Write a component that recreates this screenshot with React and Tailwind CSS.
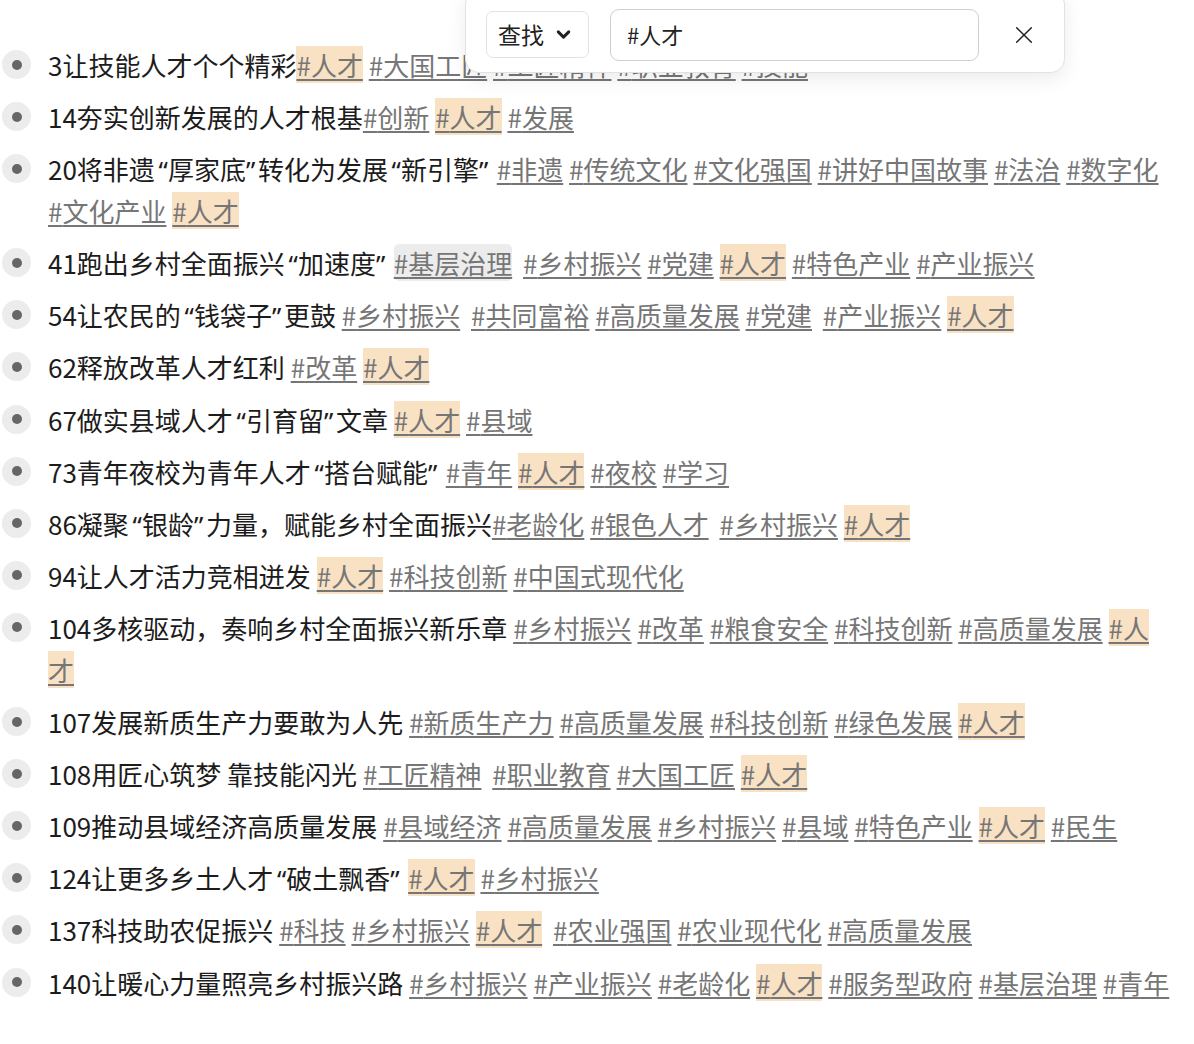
import React, { Fragment } from "react";

const items = [
  { title: "3让技能人才个个精彩", tags: ["人才", "大国工匠", "工匠精神", "职业教育", "技能"] },
  { title: "14夯实创新发展的人才根基", tags: ["创新", "人才", "发展"] },
  {
    title: "20将非遗“厚家底”转化为发展“新引擎” ",
    tags: ["非遗", "传统文化", "文化强国", "讲好中国故事", "法治", "数字化", "文化产业", "人才"],
  },
  { title: "41跑出乡村全面振兴“加速度” ", tags: ["基层治理", "+乡村振兴", "党建", "人才", "特色产业", "产业振兴"], hover: 0 },
  { title: "54让农民的“钱袋子”更鼓 ", tags: ["乡村振兴", "+共同富裕", "高质量发展", "党建", "+产业振兴", "人才"] },
  { title: "62释放改革人才红利 ", tags: ["改革", "人才"] },
  { title: "67做实县域人才“引育留”文章 ", tags: ["人才", "县域"] },
  { title: "73青年夜校为青年人才“搭台赋能” ", tags: ["青年", "人才", "夜校", "学习"] },
  { title: "86凝聚“银龄”力量，赋能乡村全面振兴", tags: ["老龄化", "银色人才", "+乡村振兴", "人才"] },
  { title: "94让人才活力竞相迸发 ", tags: ["人才", "科技创新", "中国式现代化"] },
  { title: "104多核驱动，奏响乡村全面振兴新乐章 ", tags: ["乡村振兴", "改革", "粮食安全", "科技创新", "高质量发展", "人才"] },
  { title: "107发展新质生产力要敢为人先 ", tags: ["新质生产力", "高质量发展", "科技创新", "绿色发展", "人才"] },
  { title: "108用匠心筑梦 靠技能闪光 ", tags: ["工匠精神", "+职业教育", "大国工匠", "人才"] },
  { title: "109推动县域经济高质量发展 ", tags: ["县域经济", "高质量发展", "乡村振兴", "县域", "特色产业", "人才", "民生"] },
  { title: "124让更多乡土人才“破土飘香” ", tags: ["人才", "乡村振兴"] },
  { title: "137科技助农促振兴 ", tags: ["科技", "乡村振兴", "人才", "+农业强国", "农业现代化", "高质量发展"] },
  { title: "140让暖心力量照亮乡村振兴路 ", tags: ["乡村振兴", "产业振兴", "老龄化", "人才", "服务型政府", "基层治理", "青年"] },
];

// curly quotes take about half a character, like the original page
function Title({ text }) {
  return text.split(/([“”])/).map((part, i) => {
    if (part === "“")
      return (
        <span key={i} className="inline-block w-[13px] text-right font-['Noto_Sans',sans-serif] leading-[26px]">
          {part}
        </span>
      );
    if (part === "”")
      return (
        <span key={i} className="inline-block w-[12px] text-left font-['Noto_Sans',sans-serif] leading-[26px]">
          {part}
        </span>
      );
    return <Fragment key={i}>{part}</Fragment>;
  });
}

function Tag({ name, hovered }) {
  const hit = name === "人才";
  return (
    <a
      className={
        "cursor-pointer text-[#767676] underline decoration-[#767676] decoration-[2px] underline-offset-[3px] " +
        (hit ? "bg-[#f9e1c4] " : "") +
        (hovered ? "rounded-[5px] bg-[#ececec] " : "")
      }
    >
      #{name}
    </a>
  );
}

function Row({ item }) {
  return (
    <li className="mb-[10.1px] flex items-start">
      <span className="ml-[2px] mr-[17px] mt-[6px] flex h-[29px] w-[29px] shrink-0 items-center justify-center rounded-full bg-[#ececec]">
        <span className="h-[10px] w-[10px] rounded-full bg-[#666666]" />
      </span>
      <p className="min-w-0 flex-1 pr-[24px] text-[26px] leading-[42px] text-[#1c1c1c]">
        <Title text={item.title} />
        {item.tags.map((t, i) => {
          const wide = t.startsWith("+");
          const name = wide ? t.slice(1) : t;
          return (
            <Fragment key={i}>
              {i > 0 && " "}
              {wide && <span className="inline-block w-[5px]" />}
              <Tag name={name} hovered={item.hover === i} />
            </Fragment>
          );
        })}
      </p>
    </li>
  );
}

export default function App() {
  return (
    <div className="relative min-h-[1044px] w-full bg-white font-['Noto_Sans_CJK_SC','Noto_Sans',sans-serif]">
      <ul className="pt-[44px]">
        {items.map((item, i) => (
          <Row key={i} item={item} />
        ))}
      </ul>

      <div className="absolute left-[465px] top-[-10px] flex h-[83px] w-[600px] items-center rounded-[14px] border border-[#e2e2e2] bg-white pl-[20px] pt-[6px] shadow-[0_6px_20px_rgba(0,0,0,0.08)]">
        <button className="flex h-[47px] w-[103px] items-center rounded-[7px] border border-[#e3e3e3] pl-[11px] text-[23px] text-[#222]">
          查找
          <svg className="ml-[9px]" width="21" height="21" viewBox="0 0 24 24" fill="none" stroke="#222" strokeWidth="3.4" strokeLinecap="round" strokeLinejoin="round">
            <path d="M6 9l6 6 6-6" />
          </svg>
        </button>
        <div className="ml-[21px] flex h-[52px] w-[369px] items-center rounded-[9px] border border-[#cfcfcf] pl-[16px] text-[22px] text-[#222]">
          #人才
        </div>
        <div className="flex flex-1 items-center justify-center pl-[5px]">
          <svg width="22" height="22" viewBox="0 0 24 24" fill="none" stroke="#222" strokeWidth="1.6" strokeLinecap="round">
            <path d="M4 4l16 16M20 4L4 20" />
          </svg>
        </div>
      </div>
    </div>
  );
}
